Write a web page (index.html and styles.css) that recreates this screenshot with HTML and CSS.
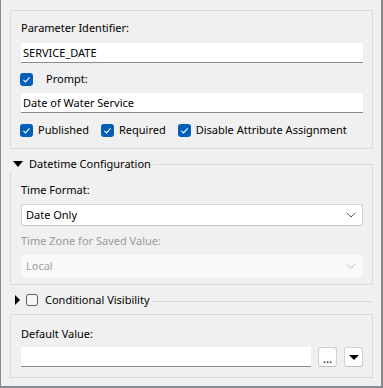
FILE: index.html
```html
<!DOCTYPE html>
<html lang="en">
<head>
    <meta charset="utf-8" />
    <title>Parameter Editor</title>
    <link rel="stylesheet" href="styles.css">
</head>
<body>
    <div class="dialog">
        <div class="group basic">
            <div class="label">Parameter Identifier:</div>
            <div class="textbox">SERVICE_DATE</div>
            <div class="check prompt">
                <span class="box on"><svg viewBox="0 0 13 13"><path d="M3.4 6.9 L5.5 8.9 L9.6 4.4" /></svg></span>
                <span>Prompt:</span>
            </div>
            <div class="textbox">Date of Water Service</div>
            <div class="check-row">
                <div class="check">
                    <span class="box on"><svg viewBox="0 0 13 13"><path d="M3.4 6.9 L5.5 8.9 L9.6 4.4" /></svg></span>
                    <span>Published</span>
                </div>
                <div class="check">
                    <span class="box on"><svg viewBox="0 0 13 13"><path d="M3.4 6.9 L5.5 8.9 L9.6 4.4" /></svg></span>
                    <span>Required</span>
                </div>
                <div class="check">
                    <span class="box on"><svg viewBox="0 0 13 13"><path d="M3.4 6.9 L5.5 8.9 L9.6 4.4" /></svg></span>
                    <span>Disable Attribute Assignment</span>
                </div>
            </div>
        </div>

        <div class="section-head datetime">
            <span class="arrow-down"></span>
            <span class="title">Datetime Configuration</span>
            <span class="rule"></span>
        </div>
        <div class="group open">
            <div class="label">Time Format:</div>
            <div class="select">
                <span>Date Only</span>
                <svg class="chevron" viewBox="0 0 10 6"><path d="M0.5 0.8 L5 5 L9.5 0.8" /></svg>
            </div>
            <div class="label disabled">Time Zone for Saved Value:</div>
            <div class="select disabled">
                <span>Local</span>
                <svg class="chevron" viewBox="0 0 10 6"><path d="M0.5 0.8 L5 5 L9.5 0.8" /></svg>
            </div>
        </div>

        <div class="section-head conditional">
            <span class="arrow-right"></span>
            <span class="box off"></span>
            <span class="title">Conditional Visibility</span>
            <span class="rule"></span>
        </div>

        <div class="group default">
            <div class="label">Default Value:</div>
            <div class="value-row">
                <div class="textbox"></div>
                <div class="small-btn dots">...</div>
                <div class="small-btn"><span class="arrow-down small"></span></div>
            </div>
        </div>
    </div>
</body>
</html>
```

FILE: styles.css
```css
body {
    margin: 0;
    background-color: #f0f0f0;
    font-family: "Segoe UI", "Noto Sans", sans-serif;
    font-size: 11px;
    line-height: 16px;
    color: #000;
}

.dialog {
    width: 383px;
    height: 388px;
    box-sizing: border-box;
    padding: 10px 8px 8px 9px;
    border-left: 1px solid #878a90;
    border-right: 2px solid #878a90;
    border-bottom: 2px solid #878a90;
    display: flex;
    flex-direction: column;
}

.group {
    border: 1px solid #dadada;
    padding: 0 9px 0 10px;
    display: flex;
    flex-direction: column;
}

.basic {
    padding-top: 9px;
    padding-bottom: 10px;
}

.basic .textbox {
    margin-top: 7px;
}

.basic .prompt {
    margin-top: 8px;
}

.basic .prompt + .textbox {
    margin-top: 6px;
}

.label {
    height: 16px;
    white-space: nowrap;
}

.label.disabled {
    color: #9a9a9a;
    margin-top: 7px;
}

.textbox {
    height: 20px;
    box-sizing: border-box;
    background-color: #fff;
    border-bottom: 1px solid #8a8a8a;
    padding: 2px 2px 0;
    line-height: 16px;
}

/* checkboxes */
.check {
    display: flex;
    align-items: center;
    height: 16px;
    gap: 5px;
    white-space: nowrap;
}

.check.prompt {
    gap: 13px;
    margin-left: -1px;
}

.check-row {
    display: flex;
    gap: 12px;
    margin-top: 9px;
    margin-left: -1px;
}

.box {
    width: 13px;
    height: 13px;
    box-sizing: border-box;
    border-radius: 3px;
    flex: none;
}

.box svg {
    display: block;
    width: 13px;
    height: 13px;
}

.box svg path {
    fill: none;
    stroke: #fff;
    stroke-width: 1.1;
}

.box.on {
    background-color: #005fb8;
}

.box.off {
    width: 12px;
    height: 12px;
    border: 1px solid #5d5d5d;
    background-color: #f6f6f6;
}

/* collapsible section headers */
.section-head {
    display: flex;
    align-items: center;
    height: 14px;
    padding-left: 3px;
}

.section-head.datetime {
    margin-top: 8px;
}

.section-head.conditional {
    margin-top: 8px;
    padding-left: 5px;
}

.section-head .title {
    margin-left: 6px;
    white-space: nowrap;
}

.section-head .rule {
    flex: 1;
    align-self: flex-end;
    margin-left: 2px;
    height: 7px;
    box-sizing: border-box;
    border-top: 1px solid #dadada;
    border-right: 1px solid #dadada;
}

.conditional .box {
    margin-left: 6px;
}

.conditional .title {
    margin-left: 7px;
}

.conditional .rule {
    height: 6px;
    border-right: none;
}

.arrow-down {
    width: 0;
    height: 0;
    border-left: 5px solid transparent;
    border-right: 5px solid transparent;
    border-top: 6px solid #000;
}

.arrow-down.small {
    border-left-width: 5px;
    border-right-width: 5px;
    border-top-width: 5px;
}

.arrow-right {
    width: 0;
    height: 0;
    border-top: 5px solid transparent;
    border-bottom: 5px solid transparent;
    border-left: 5px solid #000;
}

.open {
    border-top: none;
    padding-top: 11px;
    padding-bottom: 7px;
}

.select {
    height: 22px;
    margin-top: 6px;
    box-sizing: border-box;
    background-color: #fff;
    border: 1px solid #d2d2d2;
    border-bottom-color: #c2c2c2;
    border-radius: 3px;
    padding: 0 6px 0 4px;
    display: flex;
    align-items: center;
    justify-content: space-between;
}

.select .chevron {
    width: 10px;
    height: 6px;
}

.select .chevron path {
    fill: none;
    stroke: #555;
    stroke-width: 1;
}

.select.disabled {
    background-color: #f9f9f9;
    border-color: #f9f9f9;
    color: #a0a0a0;
}

.select.disabled .chevron path {
    stroke: #c4c4c4;
}

.default {
    margin-top: 7px;
    padding-top: 11px;
    padding-bottom: 10px;
}

.value-row {
    display: flex;
    gap: 7px;
    margin-top: 5px;
}

.value-row .textbox {
    flex: 1;
}

.small-btn {
    width: 19px;
    height: 20px;
    box-sizing: border-box;
    background-color: #fff;
    border: 1px solid #d0d0d0;
    border-bottom-color: #bdbdbd;
    border-radius: 3px;
    display: flex;
    align-items: center;
    justify-content: center;
}

.small-btn.dots {
    align-items: flex-end;
    line-height: 14px;
    font-size: 12px;
    color: #1a1a1a;
}
```
